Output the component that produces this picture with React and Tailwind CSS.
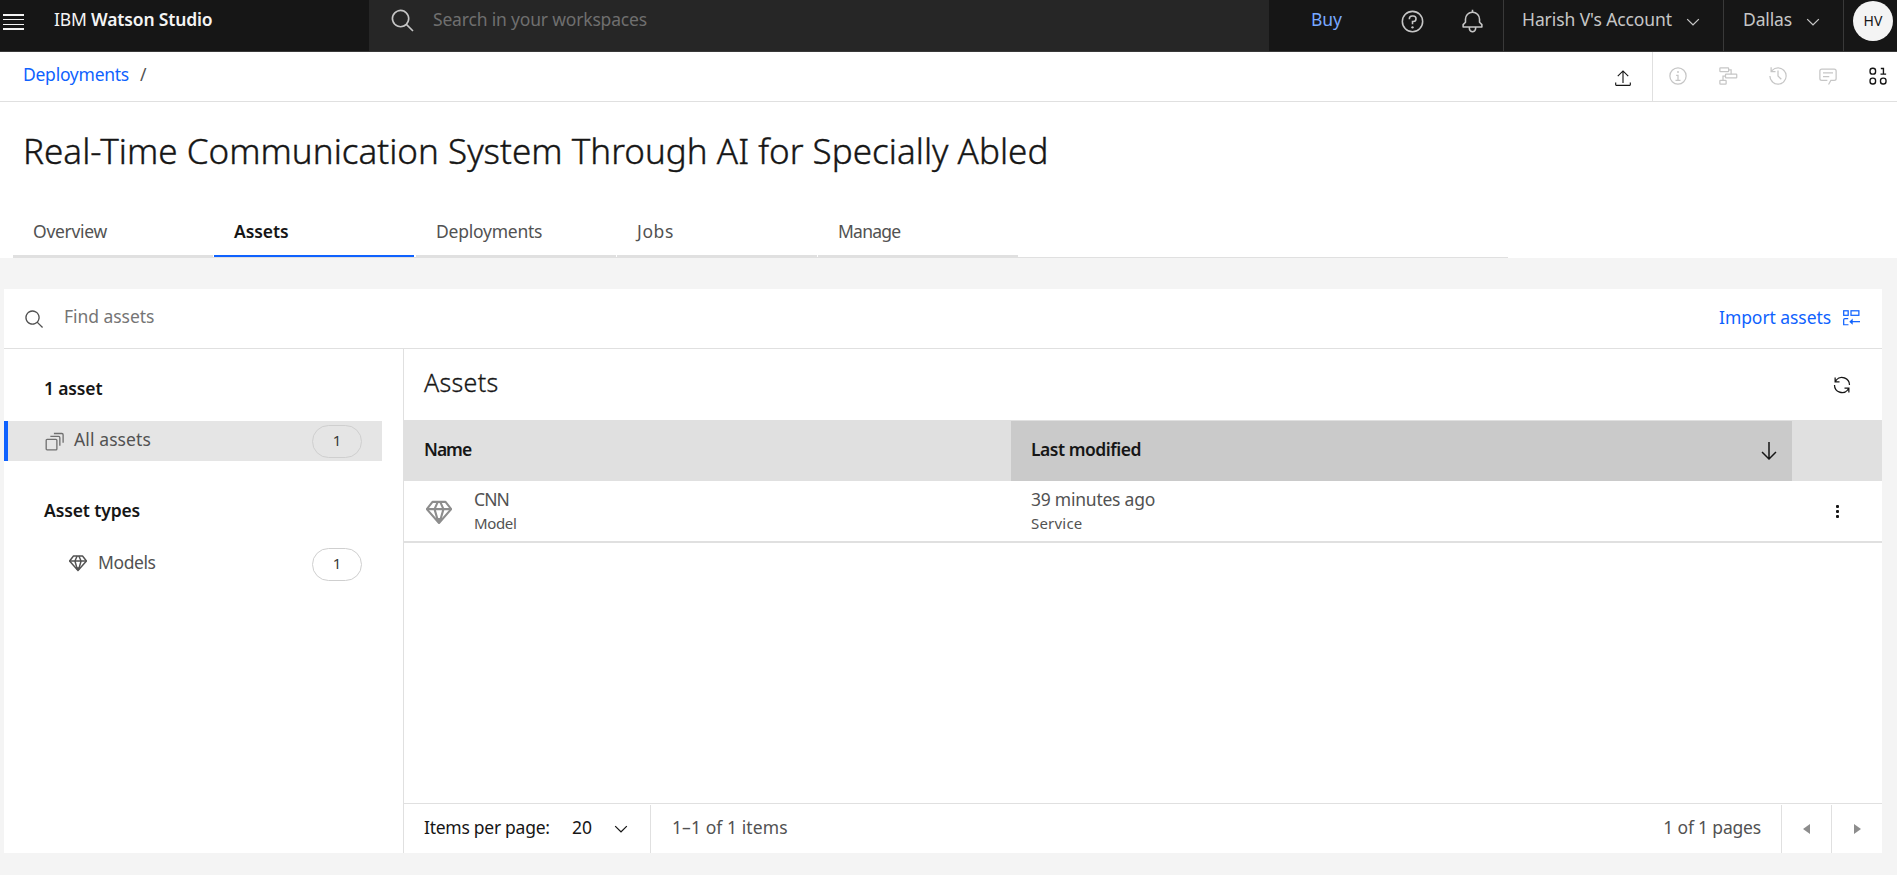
import React from "react";

/* Icons are drawn on a 32-unit grid and filled with the current text colour. */
function Icon({ className, children, viewBox = "0 0 32 32" }) {
  return (
    <svg viewBox={viewBox} fill="currentColor" className={`block shrink-0 ${className}`} aria-hidden="true">
      {children}
    </svg>
  );
}

const SearchIcon = ({ className }) => (
  <Icon className={className}>
    <path d="M29 27.586l-7.552-7.552a11.018 11.018 0 10-1.414 1.414L27.586 29zM4 13a9 9 0 119 9 9.01 9.01 0 01-9-9z" />
  </Icon>
);
const HelpIcon = ({ className }) => (
  <Icon className={className}>
    <path d="M16 2a14 14 0 1014 14A14 14 0 0016 2zm0 26a12 12 0 1112-12 12 12 0 01-12 12z" />
    <circle cx="16" cy="23.5" r="1.5" />
    <path d="M17 8h-1.5a4.49 4.49 0 00-4.5 4.5v.5h2v-.5a2.5 2.5 0 012.5-2.5H17a2.5 2.5 0 010 5h-2v4.5h2V17a4.5 4.5 0 000-9z" />
  </Icon>
);
const BellIcon = ({ className }) => (
  <Icon className={className}>
    <path d="M28.707 19.293L26 16.586V13a10.014 10.014 0 00-9-9.95V1h-2v2.05A10.014 10.014 0 006 13v3.586l-2.707 2.707A1 1 0 003 20v3a1 1 0 001 1h7v.777a5.152 5.152 0 004.5 5.199A5.006 5.006 0 0021 25v-1h7a1 1 0 001-1v-3a1 1 0 00-.293-.707zM19 25a3 3 0 01-6 0v-1h6zm8-3H5v-1.586l2.707-2.707A1 1 0 008 17v-4a8 8 0 0116 0v4a1 1 0 00.293.707L27 20.414z" />
  </Icon>
);
const ChevronIcon = ({ className }) => (
  <Icon className={className} viewBox="0 0 16 16">
    <path d="M8 11L3 6l.7-.7L8 9.6l4.3-4.3.7.7z" />
  </Icon>
);
const UploadIcon = ({ className }) => (
  <Icon className={className}>
    <path d="M6 12l1.410 1.410L15 5.830V25h2V5.830l7.590 7.580L26 12 16 2z" />
    <path d="M2 24v4a2 2 0 002 2h24a2 2 0 002-2v-4h-2v4H4v-4z" />
  </Icon>
);
const InfoIcon = ({ className }) => (
  <Icon className={className}>
    <path d="M17 22v-8h-4v2h2v6h-3v2h8v-2zM16 8a1.5 1.5 0 101.5 1.5A1.5 1.5 0 0016 8z" />
    <path d="M16 30a14 14 0 1114-14 14 14 0 01-14 14zm0-26a12 12 0 1012 12A12 12 0 0016 4z" />
  </Icon>
);
const FlowIcon = ({ className }) => (
  <Icon className={className}>
    <g fill="none" stroke="currentColor" strokeWidth="2">
      <rect x="3" y="3" width="14" height="6" rx="1" />
      <rect x="12" y="13" width="18" height="6" rx="1" />
      <rect x="3" y="23" width="10" height="6" rx="1" />
      <path d="M17 6h4v7M8 23v-7h4" />
    </g>
  </Icon>
);
const HistoryIcon = ({ className }) => (
  <Icon className={className}>
    <path d="M20.59 22L15 16.41V7h2v8.58l5 5.01L20.59 22z" />
    <path d="M16 2A13.94 13.94 0 006 6.23V2H4v8h8V8H7.08A12 12 0 114 16H2A14 14 0 1016 2z" />
  </Icon>
);
const ChatIcon = ({ className }) => (
  <Icon className={className}>
    <path d="M17.74 30L16 29l4-7h6a2 2 0 002-2V8a2 2 0 00-2-2H6a2 2 0 00-2 2v12a2 2 0 002 2h9v2H6a4 4 0 01-4-4V8a4 4 0 014-4h20a4 4 0 014 4v12a4 4 0 01-4 4h-4.84z" />
    <path d="M8 10h16v2H8zM8 16h10v2H8z" />
  </Icon>
);
const DataIcon = ({ className }) => (
  <Icon className={className}>
    <g fill="none" stroke="currentColor" strokeWidth="2.200">
      <rect x="3.300" y="3.600" width="8.800" height="9.400" rx="4" />
      <rect x="3.300" y="19.300" width="8.800" height="9.400" rx="4" />
      <rect x="20" y="19.300" width="8.800" height="9.400" rx="4" />
      <path d="M20.500 4h4.200v9M20 13h9" />
    </g>
  </Icon>
);
const ImportIcon = ({ className }) => (
  <Icon className={className}>
    <g fill="none" stroke="currentColor" strokeWidth="2.200">
      <rect x="3" y="3.200" width="8" height="8" />
      <rect x="16" y="3.200" width="14" height="8" />
      <path d="M11 17H5a2 2 0 00-2 2v9h8.500" />
      <path d="M16 22.500h16" />
    </g>
    <path d="M13 22.500l6-5.500v11z" />
  </Icon>
);
const CopiesIcon = ({ className }) => (
  <Icon className={className}>
    <g fill="none" stroke="currentColor" strokeWidth="2.200">
      <rect x="2" y="12.500" width="18" height="17.500" rx="1.500" />
      <path d="M9 7.500h14a2 2 0 012 2V23" />
      <path d="M15 2.500h13.500a2 2 0 012 2V18" />
    </g>
  </Icon>
);
const GemIcon = ({ className }) => (
  <Icon className={className}>
    <g fill="none" stroke="currentColor" strokeWidth="2.600" strokeLinejoin="round">
      <path d="M8 3.500h16l7 9L16 29.500 1 12.500z" />
      <path d="M1 12.500h30M14.500 3.500L10.500 12.500 15 28M17.500 3.500l4 9L17 28" />
    </g>
    <path d="M11.500 23.500h9L16 29.500z" />
  </Icon>
);
const RefreshIcon = ({ className }) => (
  <Icon className={className}>
    <path d="M12 10H6.780A11 11 0 0127 16h2A13 13 0 006 7.680V4H4v8h8zM20 22h5.220A11 11 0 015 16H3a13 13 0 0023 8.320V28h2v-8h-8z" />
  </Icon>
);
const ArrowDownIcon = ({ className }) => (
  <Icon className={className}>
    <path d="M24.590 16.590L17 24.170V4h-2v20.170l-7.590-7.580L6 18l10 10 10-10-1.410-1.410z" />
  </Icon>
);

function Pill({ children }) {
  return (
    <span className="flex h-[33px] w-[50px] items-center justify-center rounded-full border border-[#cfcfcf] pb-[3px] text-[15px] leading-5 text-[#393939]">
      {children}
    </span>
  );
}

function Tab({ label, active, tracking }) {
  return (
    <div
      className={
        active
          ? "mr-0.5 h-[45px] w-[200px] border-b-2 border-[#0f62fe] pt-[7px] pl-5 font-semibold text-[#161616]"
          : "mr-px h-[45px] w-[200px] border-b-2 border-[#e0e0e0] pt-[7px] pl-5 text-[#525252]"
      }
    >
      <span className={tracking}>{label}</span>
    </div>
  );
}

function TopBar() {
  return (
    <header className="flex h-[52px] shrink-0 border-b border-[#393939] bg-[#161616] text-[#c6c6c6]">
      <div className="flex w-[369px] pl-[3px]">
        <div className="mt-[14px] flex h-4 w-[21px] flex-col justify-between">
          <i className="h-[1.500px] bg-[#f4f4f4]" />
          <i className="h-[1.500px] bg-[#f4f4f4]" />
          <i className="h-[1.500px] bg-[#f4f4f4]" />
          <i className="h-[1.500px] bg-[#f4f4f4]" />
        </div>
        <div className="ml-[30px] pt-[7px] tracking-[-0.160px] text-[#f4f4f4]">
          IBM <span className="font-semibold">Watson Studio</span>
        </div>
      </div>
      <div className="flex w-[900px] bg-[#262626] pl-[21px]">
        <SearchIcon className="mt-2 size-[26px]" />
        <span className="ml-[17px] pt-[7px] tracking-[-0.180px] text-[#6f6f6f]">Search in your workspaces</span>
      </div>
      <span className="w-[131px] pt-[7px] pl-[42px] tracking-[-0.040px] text-[#78a9ff]">Buy</span>
      <HelpIcon className="mt-[9px] size-[25px]" />
      <BellIcon className="mt-[9px] ml-[35px] size-[25px]" />
      <div className="ml-[18px] flex w-[220px] border-l border-[#393939] pt-[7px] pl-[18px]">
        <span className="w-[151px] whitespace-nowrap tracking-[-0.090px]">Harish V's Account</span>
        <ChevronIcon className="mt-[5px] ml-[10px] size-5" />
      </div>
      <div className="flex w-[120px] border-l border-[#393939] pt-[7px] pl-[19px]">
        <span className="w-[50px] tracking-[-0.140px]">Dallas</span>
        <ChevronIcon className="mt-[5px] ml-[10px] size-5" />
      </div>
      <div className="flex flex-1 border-l border-[#393939] pl-[9px]">
        <span className="mt-px flex size-10 items-center justify-center rounded-full bg-[#f4f4f4] text-[14px] text-[#161616]">HV</span>
      </div>
    </header>
  );
}

function Breadcrumb() {
  return (
    <div className="flex h-[50px] shrink-0 border-b border-[#e0e0e0] bg-white">
      <span className="mt-[10px] ml-[23px] tracking-[-0.260px] text-[#0f62fe]">Deployments</span>
      <span className="mt-[10px] ml-[11px] text-[#525252]">/</span>
      <UploadIcon className="mt-[17px] ml-auto mr-px size-[18px] text-[#161616]" />
      <div className="ml-[19px] flex w-[245px] gap-[30px] border-l border-[#e0e0e0] pt-[14px] pl-[15px] text-[#c6c6c6]">
        <InfoIcon className="size-5" />
        <FlowIcon className="size-5" />
        <HistoryIcon className="size-5" />
        <ChatIcon className="size-5" />
        <DataIcon className="size-5 text-[#161616]" />
      </div>
    </div>
  );
}

function Sidebar() {
  return (
    <aside className="w-[399px] text-[#525252]">
      <h2 className="h-[72px] pt-[27px] pl-10 font-semibold tracking-[-0.150px] text-[#161616]">1 asset</h2>
      <div className="flex h-10 w-[378px] border-l-4 border-[#0f62fe] bg-[#e5e5e5] pr-5 pl-[37px]">
        <CopiesIcon className="mt-[11px] size-[19px] text-[#6f6f6f]" />
        <span className="mt-[6px] ml-[10px] tracking-[0.110px]">All assets</span>
        <span className="mt-1 ml-auto"><Pill>1</Pill></span>
      </div>
      <h2 className="pt-[37px] pl-10 font-semibold tracking-[-0.120px] text-[#161616]">Asset types</h2>
      <div className="mt-[23px] flex h-10 w-[378px] pr-5 pl-[65px]">
        <GemIcon className="mt-[9px] size-[18px]" />
        <span className="mt-[5px] ml-[11px] tracking-[-0.400px]">Models</span>
        <span className="mt-[3px] ml-auto"><Pill>1</Pill></span>
      </div>
    </aside>
  );
}

function AssetTable() {
  return (
    <section className="flex flex-1 flex-col border-l border-[#e0e0e0] text-[#525252]">
      <div className="flex h-[71px] items-start justify-between pr-[30px] pl-5">
        <h2 className="pt-[17px] text-[25px] leading-8 font-light tracking-[0.300px] text-[#161616] [-webkit-text-stroke:0.3px_#161616]">Assets</h2>
        <RefreshIcon className="mt-[26px] size-5 text-[#161616]" />
      </div>
      <div className="flex h-[61px] border-t border-[#e0e0e0] bg-[#e0e0e0] font-semibold text-[#161616]">
        <div className="w-[607px] pt-[16px] pl-5 tracking-[-1px]">Name</div>
        <div className="flex w-[781px] justify-between bg-[#cacaca] pt-[16px] pr-[11px] pl-5">
          <span className="tracking-[-0.480px]">Last modified</span>
          <ArrowDownIcon className="mt-[2px] size-6" />
        </div>
      </div>
      <div className="flex h-[62px] border-b-2 border-[#e0e0e0]">
        <div className="flex w-[607px] pl-[22px]">
          <GemIcon className="mt-[18px] size-[26px] text-[#8d8d8d]" />
          <div className="mt-[6px] ml-[22px]">
            <div className="tracking-[-0.890px]">CNN</div>
            <div className="mt-px text-[15px] leading-[22px] tracking-[-0.350px]">Model</div>
          </div>
        </div>
        <div className="mt-[6px] w-[781px] pl-5">
          <div className="tracking-[-0.240px]">39 minutes ago</div>
          <div className="mt-px text-[15px] leading-[22px] tracking-[0.200px]">Service</div>
        </div>
        <div className="ml-[44px] flex h-[61px] flex-col items-center justify-center gap-[2px] text-[#161616]">
          <i className="size-[3px] rounded-[1px] bg-[#161616]" />
          <i className="size-[3px] rounded-[1px] bg-[#161616]" />
          <i className="size-[3px] rounded-[1px] bg-[#161616]" />
        </div>
      </div>
      <footer className="mt-auto flex h-[50px] border-t border-[#e0e0e0] pt-px">
        <div className="flex w-[247px] border-r border-[#e0e0e0] pt-[10px] pl-5 text-[#161616]">
          <span className="w-[128px] whitespace-nowrap tracking-[-0.270px]">Items per page:</span>
          <span className="ml-5 w-5">20</span>
          <ChevronIcon className="mt-[4px] ml-[19px] size-5" />
        </div>
        <span className="pt-[10px] pl-[21px] tracking-[0.080px]">1–1 of 1 items</span>
        <span className="mr-5 ml-auto pt-[10px] tracking-[-0.180px]">1 of 1 pages</span>
        <div className="flex w-[50px] items-center justify-center border-l border-[#e0e0e0] text-[#8d8d8d]">
          <Icon className="h-[10px] w-[7px]" viewBox="0 0 7 10"><path d="M7 0v10L0 5z" /></Icon>
        </div>
        <div className="flex w-[51px] items-center justify-center border-l border-[#e0e0e0] text-[#8d8d8d]">
          <Icon className="h-[10px] w-[7px]" viewBox="0 0 7 10"><path d="M0 0v10l7-5z" /></Icon>
        </div>
      </footer>
    </section>
  );
}

export default function App() {
  return (
    <div className="flex h-[875px] flex-col overflow-hidden bg-[#f4f4f4] font-['Noto_Sans','Open_Sans',sans-serif] text-[17.500px] leading-6">
      <TopBar />
      <Breadcrumb />
      <div className="flex h-[156px] shrink-0 flex-col bg-white">
        <h1 className="pt-[25px] pl-[23px] text-[35px] leading-[48px] font-light tracking-[0.020px] text-[#161616] [-webkit-text-stroke:0.4px_#161616]">
          Real-Time Communication System Through AI for Specially Abled
        </h1>
        <nav className="mt-auto ml-[13px] flex w-[1495px] border-b border-[#e0e0e0]">
          <Tab label="Overview" tracking="tracking-[-0.290px]" />
          <Tab label="Assets" active tracking="tracking-[-0.050px]" />
          <Tab label="Deployments" tracking="tracking-[-0.240px]" />
          <Tab label="Jobs" tracking="tracking-[0.620px]" />
          <Tab label="Manage" tracking="tracking-[-0.780px]" />
        </nav>
      </div>
      <main className="mt-[31px] ml-1 flex h-[564px] w-[1878px] flex-col bg-white">
        <div className="flex h-[60px] shrink-0 border-b border-[#e0e0e0] pr-[22px] pl-[20px]">
          <SearchIcon className="mt-5 size-[21px] text-[#525252]" />
          <span className="mt-[15px] ml-[19px] tracking-[-0.050px] text-[#757575]">Find assets</span>
          <span className="mt-[16px] mr-[11px] ml-auto tracking-[-0.070px] text-[#0f62fe]">Import assets</span>
          <ImportIcon className="mt-5 size-[18px] text-[#0f62fe]" />
        </div>
        <div className="flex flex-1">
          <Sidebar />
          <AssetTable />
        </div>
      </main>
    </div>
  );
}
